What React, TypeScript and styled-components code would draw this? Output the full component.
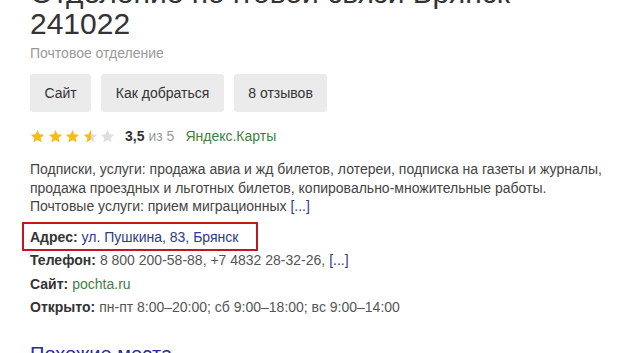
import React from 'react';
import styled, { createGlobalStyle } from 'styled-components';

const GlobalStyle = createGlobalStyle`
  html, body {
    margin: 0;
    padding: 0;
    background: #fff;
    overflow: hidden;
  }
  body {
    font-family: Arial, "Liberation Sans", sans-serif;
    color: #333;
  }
`;

const Card = styled.div`
  width: 620px;
  height: 353px;
  overflow: hidden;
  padding-left: 30px;
  box-sizing: border-box;
`;

const Title = styled.h1`
  margin: -23px 0 0;
  font-size: 30px;
  line-height: 31px;
  font-weight: 400;
  color: #333;
  white-space: nowrap;
`;

const Subtitle = styled.div`
  margin-top: 5px;
  font-size: 14px;
  line-height: 18px;
  color: #999;
`;

const Actions = styled.div`
  display: flex;
  gap: 10px;
  margin-top: 12px;
`;

const ActionButton = styled.button`
  height: 38px;
  padding: 0 14.5px;
  border: none;
  border-radius: 3px;
  background: #ebebeb;
  font-family: Arial, "Liberation Sans", sans-serif;
  font-size: 14px;
  color: #333;
`;

const RatingRow = styled.div`
  display: flex;
  align-items: center;
  margin-top: 15px;
  height: 18px;
  font-size: 14px;
`;

const Stars = styled.div`
  display: flex;
  gap: 2.5px;
  margin-right: 10px;
`;

const Score = styled.b`
  color: #333;
  margin-right: 4px;
`;

const Muted = styled.span`
  color: #999;
  margin-right: 11px;
`;

const GreenLink = styled.a`
  color: #3f7f3f;
  text-decoration: none;
`;

const Description = styled.p`
  margin: 15px 0 0;
  font-size: 14px;
  line-height: 18.5px;
  color: #444;
  white-space: nowrap;
`;

const BlueLink = styled.a`
  color: #2e3a8c;
  text-decoration: none;
`;

const Facts = styled.div`
  display: flex;
  flex-direction: column;
  align-items: flex-start;
  gap: 5.5px;
  margin-top: 12px;
  font-size: 14px;
  line-height: 18px;
`;

const Fact = styled.div<{ $marked?: boolean }>`
  color: #555;
  white-space: nowrap;
  ${p =>
    p.$marked &&
    `
    border: 2px solid #c4161c;
    margin: -6px 0 -5px -8px;
    padding: 4px 18px 3px 6px;
  `}
`;

const Label = styled.b`
  color: #333;
  margin-right: 4px;
`;

const Similar = styled.h2`
  margin: 26px 0 0;
  font-size: 20px;
  line-height: 24px;
  font-weight: 400;
  color: #1f2f95;
`;

const Star: React.FC<{ fill: number; id: string }> = ({ fill, id }) => (
  <svg width="15" height="15" viewBox="0 0 24 24">
    <defs>
      <linearGradient id={id}>
        <stop offset={fill} stopColor="#f8bd13" />
        <stop offset={fill} stopColor="#dedede" />
      </linearGradient>
    </defs>
    <path
      d="M12 1.5l3.1 7 7.6.7-5.8 5 1.8 7.4L12 17.7l-6.7 3.9 1.8-7.4-5.8-5 7.6-.7z"
      fill={`url(#${id})`}
    />
  </svg>
);

const rating = 3.5;

const App: React.FC = () => {
  return (
    <>
      <GlobalStyle />
      <Card>
        <Title>
          Отделение почтовой связи Брянск
          <br />
          241022
        </Title>
        <Subtitle>Почтовое отделение</Subtitle>

        <Actions>
          <ActionButton>Сайт</ActionButton>
          <ActionButton>Как добраться</ActionButton>
          <ActionButton>8 отзывов</ActionButton>
        </Actions>

        <RatingRow>
          <Stars>
            {[0, 1, 2, 3, 4].map(i => (
              <Star key={i} id={`star-${i}`} fill={Math.max(0, Math.min(1, rating - i))} />
            ))}
          </Stars>
          <Score>3,5</Score>
          <Muted>из 5</Muted>
          <GreenLink href="#">Яндекс.Карты</GreenLink>
        </RatingRow>

        <Description>
          Подписки, услуги: продажа авиа и жд билетов, лотереи, подписка на газеты и журналы,
          <br />
          продажа проездных и льготных билетов, копировально-множительные работы.
          <br />
          Почтовые услуги: прием миграционных <BlueLink href="#">[...]</BlueLink>
        </Description>

        <Facts>
          <Fact $marked>
            <Label>Адрес:</Label>
            <BlueLink href="#">ул. Пушкина, 83, Брянск</BlueLink>
          </Fact>
          <Fact>
            <Label>Телефон:</Label>8 800 200-58-88, +7 4832 28-32-26, <BlueLink href="#">[...]</BlueLink>
          </Fact>
          <Fact>
            <Label>Сайт:</Label>
            <GreenLink href="#">pochta.ru</GreenLink>
          </Fact>
          <Fact>
            <Label>Открыто:</Label>пн-пт 8:00–20:00; сб 9:00–18:00; вс 9:00–14:00
          </Fact>
        </Facts>

        <Similar>Похожие места</Similar>
      </Card>
    </>
  );
};

export default App;
